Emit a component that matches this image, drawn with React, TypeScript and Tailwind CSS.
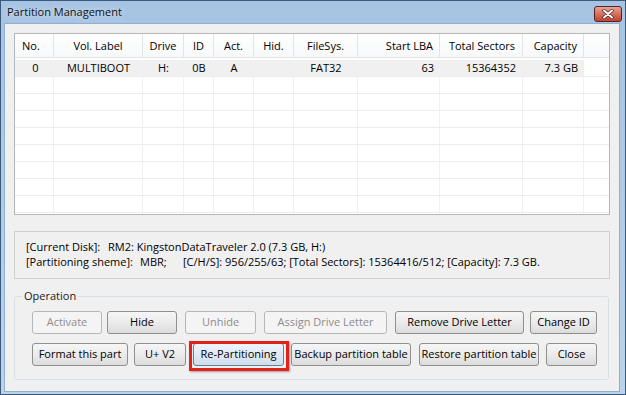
import React from 'react';

type Col = { label: string; w: number; head: string; cell: string };

const cols: Col[] = [
  { label: 'No.', w: 39, head: 'text-left pl-[7px]', cell: 'text-center pl-[2px]' },
  { label: 'Vol. Label', w: 89, head: 'text-center', cell: 'text-center' },
  { label: 'Drive', w: 41, head: 'text-center', cell: 'text-center' },
  { label: 'ID', w: 30, head: 'text-center', cell: 'text-center' },
  { label: 'Act.', w: 40, head: 'text-center', cell: 'text-center' },
  { label: 'Hid.', w: 40, head: 'text-center', cell: 'text-center' },
  { label: 'FileSys.', w: 64, head: 'text-center', cell: 'text-center' },
  { label: 'Start LBA', w: 82, head: 'text-right pr-[6px]', cell: 'text-right pr-[6px]' },
  { label: 'Total Sectors', w: 83, head: 'text-right pr-[7px]', cell: 'text-right pr-[7px]' },
  { label: 'Capacity', w: 61, head: 'text-right pr-[6px]', cell: 'text-right pr-[6px]' },
];

const row = ['0', 'MULTIBOOT', 'H:', '0B', 'A', '', 'FAT32', '63', '15364352', '7.3 GB'];

function Btn({
  label,
  w,
  ml = 0,
  disabled = false,
  hot = false,
}: {
  label: string;
  w: number;
  ml?: number;
  disabled?: boolean;
  hot?: boolean;
}) {
  const base = 'h-[23px] rounded-[3px] border flex items-center justify-center whitespace-nowrap';
  let look = 'border-[#8e8f8f] bg-gradient-to-b from-[#f6f6f6] via-[#ebebeb] to-[#dcdcdc] text-black';
  if (disabled) look = 'border-[#b5b8ba] bg-[#f4f4f4] text-[#8d8d8d]';
  if (hot) look = 'border-[#62809c] bg-gradient-to-b from-[#eef4fa] via-[#e0eaf4] to-[#cfdeec] text-black';
  return (
    <div className="relative shrink-0" style={{ width: w, marginLeft: ml }}>
      <div className={`${base} ${look}`}>{label}</div>
      {hot && (
        <div className="absolute left-[-4px] top-[-2px] w-[100px] h-[30px] border-[3px] border-[#e2201c] shadow-[1px_1px_2px_rgba(0,0,0,0.35)]" />
      )}
    </div>
  );
}

export default function App() {
  return (
    <div className="w-[626px] h-[395px] bg-gradient-to-b from-[#a7c3e3] to-[#bcd3ec] border border-[#3d5a7c] flex flex-col font-['Open_Sans',sans-serif] text-[11px] text-black">
      {/* title bar */}
      <div className="h-[22px] flex items-center justify-between pl-[6px] pr-[3px]">
        <span className="text-[11px] text-[#111] [text-shadow:0_0_6px_rgba(255,255,255,0.8)]">Partition Management</span>
        <div className="w-[28px] h-[16px] mt-[3px] rounded-[3px] border border-[#5a231f] bg-gradient-to-b from-[#e7a596] via-[#d3705f] to-[#c2402f] flex items-center justify-center">
          <svg width="12" height="10" viewBox="0 0 12 10">
            <path d="M2 1.5 L10 8.5 M10 1.5 L2 8.5" stroke="#4a2520" strokeWidth="3.4" strokeLinecap="round" />
            <path d="M2 1.5 L10 8.5 M10 1.5 L2 8.5" stroke="#ffffff" strokeWidth="2" strokeLinecap="round" />
          </svg>
        </div>
      </div>

      {/* client area */}
      <div className="flex-1 ml-[3px] mr-[5px] mb-[2px] bg-[#f0f0f0] border border-[#8fb0d3] px-[9px] pt-[9px]">
        {/* partition list */}
        <div className="h-[182px] border border-[#b4b7bc] bg-white overflow-hidden">
          <div className="flex h-[24px] border-b border-[#e3e4e6] bg-gradient-to-b from-white to-[#f7f8f9]">
            {cols.map((c) => (
              <div
                key={c.label}
                className={`shrink-0 h-full leading-[24px] border-r border-[#e3e4e6] ${c.head}`}
                style={{ width: c.w }}
              >
                {c.label}
              </div>
            ))}
          </div>
          <div className="pt-[2px]">
            <div className="flex h-[17px] border-b border-[#ececec]">
              {row.map((v, i) => (
                <div
                  key={i}
                  className={`shrink-0 h-full leading-[16px] bg-[#f0f0f0] ${cols[i].cell}`}
                  style={{ width: cols[i].w }}
                >
                  {v}
                </div>
              ))}
            </div>
            {Array.from({ length: 9 }).map((_, r) => (
              <div key={r} className="flex h-[17px] border-b border-[#ececec]">
                {cols.map((c) => (
                  <div key={c.label} className="shrink-0 h-full border-r border-[#f0f0f0]" style={{ width: c.w }} />
                ))}
              </div>
            ))}
          </div>
        </div>

        {/* disk info */}
        <div className="mt-[16px] h-[48px] border border-[#cfcfcf] pl-[11px] pt-[7px] leading-[15px]">
          <div className="flex">
            <span className="w-[82px]">[Current Disk]:</span>
            <span>RM2: KingstonDataTraveler 2.0 (7.3 GB, H:)</span>
          </div>
          <div className="flex">
            <span className="w-[114px]">[Partitioning sheme]:</span>
            <span className="w-[43px]">MBR;</span>
            <span>[C/H/S]: 956/255/63; [Total Sectors]: 15364416/512; [Capacity]: 7.3 GB.</span>
          </div>
        </div>

        {/* operation group */}
        <div className="relative mt-[17px] h-[84px] mr-[1px] border border-[#d5dfe5] rounded-[3px] pl-[17px] pt-[14px]">
          <span className="absolute left-[7px] top-[-9px] px-[2px] bg-[#f0f0f0] text-[#222]">Operation</span>
          <div className="flex">
            <Btn label="Activate" w={70} disabled />
            <Btn label="Hide" w={70} ml={5} />
            <Btn label="Unhide" w={71} ml={8} disabled />
            <Btn label="Assign Drive Letter" w={123} ml={8} disabled />
            <Btn label="Remove Drive Letter" w={129} ml={8} />
            <Btn label="Change ID" w={67} ml={6} />
          </div>
          <div className="flex mt-[9px]">
            <Btn label="Format this part" w={96} />
            <Btn label="U+ V2" w={52} ml={6} />
            <Btn label="Re-Partitioning" w={91} ml={7} hot />
            <Btn label="Backup partition table" w={120} ml={7} />
            <Btn label="Restore partition table" w={120} ml={8} />
            <Btn label="Close" w={51} ml={7} />
          </div>
        </div>
      </div>
    </div>
  );
}
